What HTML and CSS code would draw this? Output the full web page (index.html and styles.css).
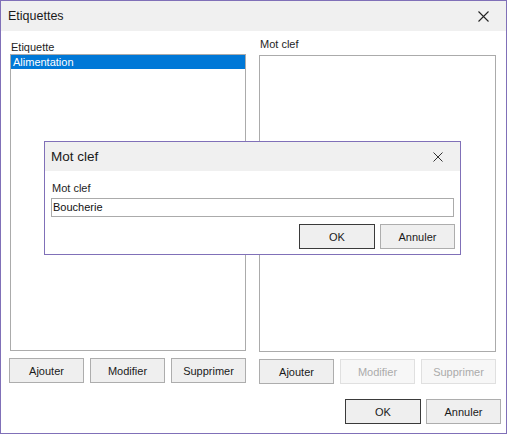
FILE: index.html
```html
<!DOCTYPE html>
<html>
<head>
<meta charset="utf-8">
<link rel="stylesheet" href="styles.css">
</head>
<body>
<div class="window">
  <div class="titlebar">
    <span class="title">Etiquettes</span>
    <svg class="close" width="11" height="11" viewBox="0 0 11 11"><path d="M0.5 0.5 L10.5 10.5 M10.5 0.5 L0.5 10.5" stroke="#222" stroke-width="1.1" fill="none"/></svg>
  </div>
  <div class="content">
    <div class="columns">
      <div class="col col-left">
        <div class="label label-left">Etiquette</div>
        <div class="listbox">
          <div class="item selected">Alimentation</div>
        </div>
        <div class="btnrow btnrow-left">
          <button class="btn">Ajouter</button>
          <button class="btn">Modifier</button>
          <button class="btn">Supprimer</button>
        </div>
      </div>
      <div class="col col-right">
        <div class="label label-right">Mot clef</div>
        <div class="listbox"></div>
        <div class="btnrow">
          <button class="btn">Ajouter</button>
          <button class="btn disabled">Modifier</button>
          <button class="btn disabled">Supprimer</button>
        </div>
      </div>
    </div>
    <div class="footer">
      <button class="btn btn-ok">OK</button>
      <button class="btn">Annuler</button>
    </div>
  </div>

  <div class="modal">
    <div class="titlebar modal-titlebar">
      <span class="title modal-title">Mot clef</span>
      <svg class="close modal-close" width="10" height="10" viewBox="0 0 10 10"><path d="M0.5 0.5 L9.5 9.5 M9.5 0.5 L0.5 9.5" stroke="#333" stroke-width="1" fill="none"/></svg>
    </div>
    <div class="modal-body">
      <div class="label modal-label">Mot clef</div>
      <div class="textbox">Boucherie</div>
      <div class="modal-buttons">
        <button class="btn btn-ok modal-ok">OK</button>
        <button class="btn">Annuler</button>
      </div>
    </div>
  </div>
</div>
</body>
</html>
```

FILE: styles.css
```css
* { box-sizing: border-box; }
html, body { margin: 0; padding: 0; background: #ffffff; }
body {
  font-family: "Liberation Sans", Arial, sans-serif;
  font-size: 11px;
  color: #1e1e1e;
}
.window {
  position: relative;
  width: 507px;
  height: 434px;
  border: 1px solid #8070b8;
  background: #ffffff;
  overflow: hidden;
}
.titlebar {
  height: 30px;
  background: #f0f0f0;
  display: flex;
  align-items: center;
  justify-content: space-between;
  padding: 0 17px 0 7px;
}
.title {
  font-size: 12.5px;
  color: #1a1a1a;
}
.close { display: block; }
.content {
  padding: 0 5px 0 8px;
}
.columns {
  display: flex;
  gap: 13px;
}
.col { display: flex; flex-direction: column; }
.col-left { width: 237px; }
.col-right { width: 237px; }
.label { line-height: 13px; }
.label-left { margin-top: 10px; padding-left: 2px; height: 13px; }
.label-right { margin-top: 7px; padding-left: 1px; height: 17px; }
.listbox {
  height: 297px;
  border: 1px solid #ababab;
  background: #ffffff;
  padding: 0;
}
.col-left .listbox { margin-left: 1px; }
.item {
  height: 14px;
  line-height: 14px;
  padding-left: 2px;
  font-size: 11px;
}
.item.selected {
  background: #0078d7;
  color: #ffffff;
}
.btnrow {
  display: flex;
  justify-content: space-between;
  margin-top: 7px;
}
.btn {
  width: 75px;
  height: 25px;
  padding: 0;
  margin: 0;
  font-family: "Liberation Sans", Arial, sans-serif;
  font-size: 11px;
  color: #1a1a1a;
  background: #efefef;
  border: 1px solid #adadad;
  border-radius: 0;
}
.btn.disabled {
  background: #f7f7f7;
  border-color: #e0e0e0;
  color: #ababab;
}
.btn-ok {
  width: 76px;
  border-color: #3a3a3a;
}
.footer {
  display: flex;
  justify-content: flex-end;
  gap: 5px;
  margin-top: 15px;
}
.modal {
  position: absolute;
  left: 43px;
  top: 140px;
  width: 417px;
  height: 114px;
  border: 1px solid #8070b8;
  background: #ffffff;
}
.modal-titlebar {
  height: 29px;
  padding: 0 17px 0 6px;
}
.modal-title { font-size: 13.5px; }
.modal-body {
  padding: 10px 6px 0 6px;
}
.modal-label {
  padding-left: 1px;
  line-height: 14px;
  height: 17px;
}
.textbox {
  height: 19px;
  border: 1px solid #ababab;
  padding-left: 1px;
  line-height: 17px;
  font-size: 11px;
  color: #111;
}
.modal-buttons {
  display: flex;
  justify-content: flex-end;
  gap: 5px;
  margin-top: 7px;
  margin-right: -1px;
}
```
